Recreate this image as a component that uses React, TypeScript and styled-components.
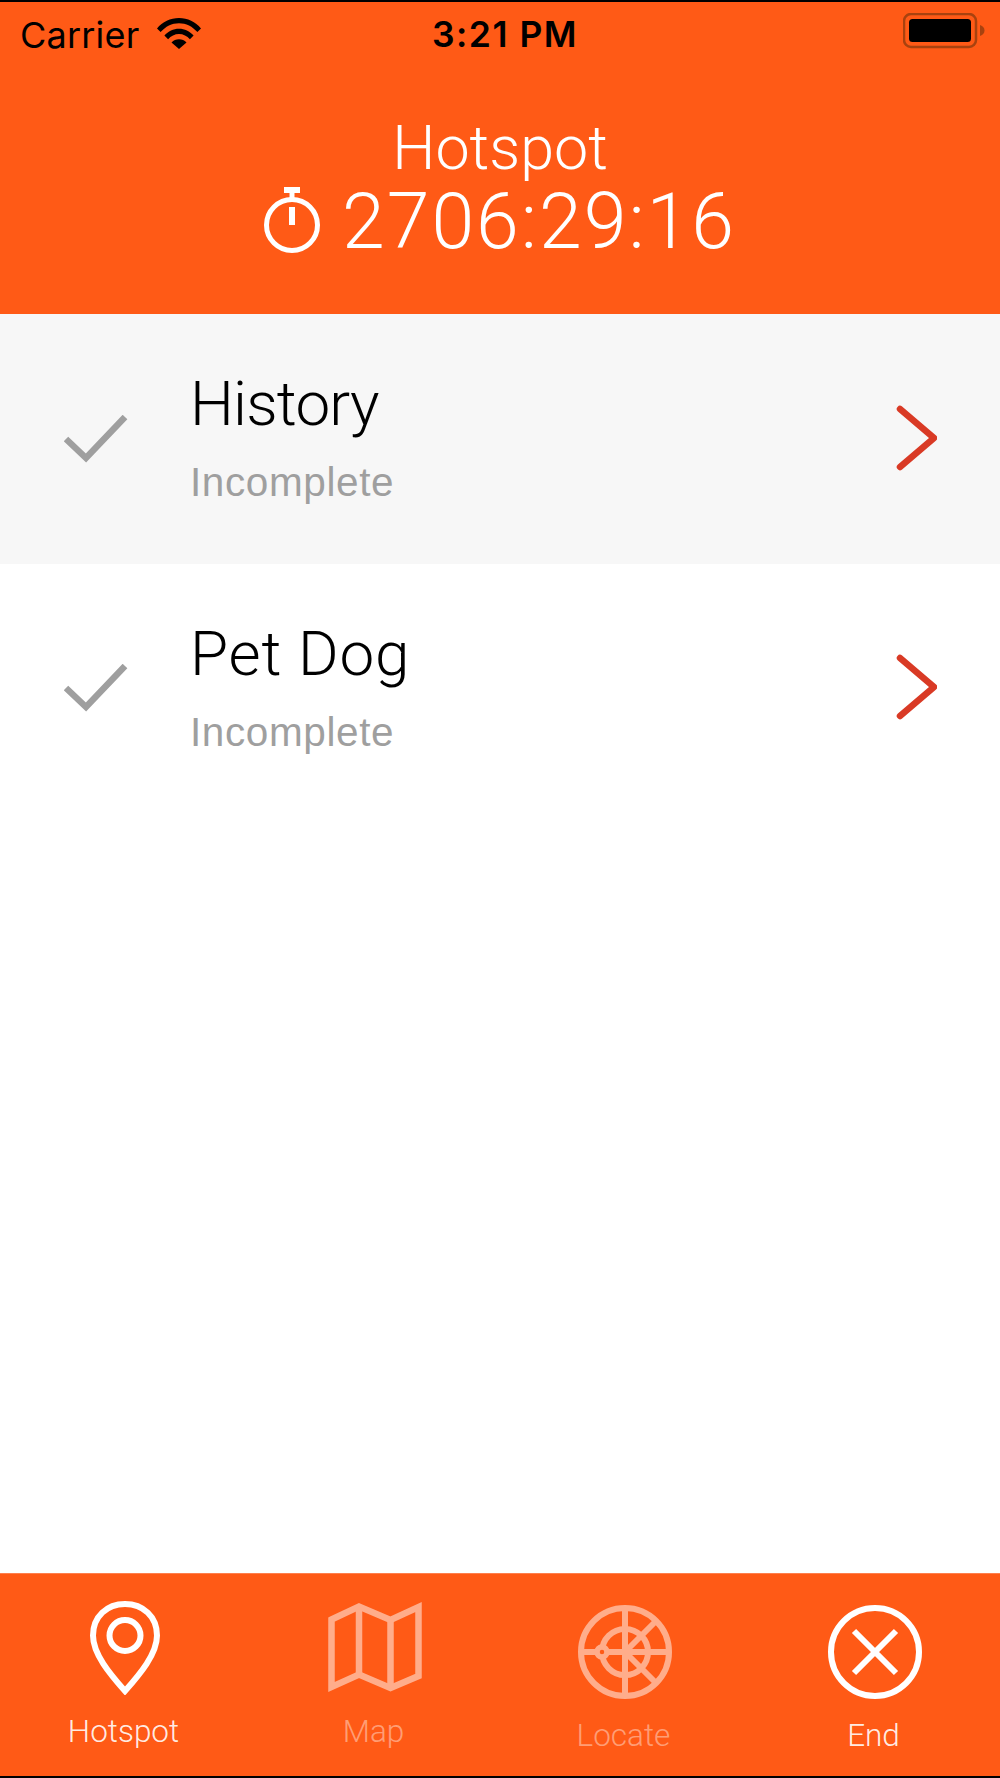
import React from "react";
import styled, { createGlobalStyle } from "styled-components";

const Global = createGlobalStyle`
  html, body { margin: 0; padding: 0; background: #000; }
  * { box-sizing: border-box; }
`;

const Screen = styled.div`
  width: 1000px;
  height: 1778px;
  padding: 2px 0;
  background: #000;
  display: flex;
  flex-direction: column;
  font-family: Roboto, "Liberation Sans", sans-serif;
`;

const Header = styled.header`
  height: 312px;
  flex: none;
  background: #ff5a16;
  display: flex;
  flex-direction: column;
`;

const StatusBar = styled.div`
  height: 62px;
  display: grid;
  grid-template-columns: 1fr auto 1fr;
  align-items: center;
  padding: 0 15px 0 20px;
  color: #000;
  font-family: Inter, "Liberation Sans", sans-serif;
`;

const StatusLeft = styled.div`
  display: flex;
  align-items: center;
  gap: 18px;
`;

const Carrier = styled.span`
  font-size: 36px;
  line-height: 42px;
  letter-spacing: 0.2px;
  padding-top: 3px;
`;

const Time = styled.span`
  font-size: 35.5px;
  line-height: 42px;
  font-weight: 600;
  letter-spacing: 1.5px;
  padding-top: 3px;
  margin-left: 5px;
`;

const Battery = styled.div`
  justify-self: end;
`;

const HeaderBody = styled.div`
  display: flex;
  flex-direction: column;
  align-items: center;
  padding-top: 48px;
  color: #fff;
  font-weight: 300;
`;

const Title = styled.div`
  font-size: 61px;
  line-height: 72px;
`;

const Timer = styled.div`
  display: flex;
  align-items: center;
  gap: 22px;
  font-size: 77px;
  line-height: 76px;
  letter-spacing: 2px;
`;

const StopwatchIcon = styled.svg`
  display: block;
  margin-bottom: 4px;
`;

const List = styled.main`
  flex: 1;
  background: #fff;
`;

const Row = styled.div<{ $shaded?: boolean }>`
  height: 249.5px;
  display: flex;
  align-items: center;
  padding: 0 63px 0 64px;
  background: ${(p) => (p.$shaded ? "#f7f7f7" : "#fff")};
`;

const RowText = styled.div`
  flex: 1;
  margin-left: 62px;
  padding-bottom: 3px;
`;

const RowTitle = styled.div<{ $track: number }>`
  font-size: 62px;
  line-height: 72px;
  font-weight: 300;
  letter-spacing: ${(p) => p.$track}px;
  color: #000;
`;

const RowSub = styled.div`
  font-family: "Liberation Sans", Arial, sans-serif;
  font-size: 40.5px;
  line-height: 48px;
  letter-spacing: 0.6px;
  margin-top: 18px;
  color: #9f9f9f;
`;

const ChevronIcon = styled.svg`
  display: block;
  margin-bottom: 2px;
`;

const TabBar = styled.footer`
  height: 203px;
  flex: none;
  display: grid;
  grid-template-columns: repeat(4, 1fr);
  background: #ff5a16;
  border-top: 1px solid #ff7f4c;
`;

const Tab = styled.div<{ $dim?: boolean; $top: number }>`
  display: flex;
  flex-direction: column;
  align-items: center;
  padding-top: ${(p) => p.$top}px;
  color: ${(p) => (p.$dim ? "rgba(255,255,255,0.42)" : "rgba(255,255,255,0.9)")};
  font-weight: 300;
  font-size: 31.5px;
  line-height: 38px;
`;

const IconSlot = styled.div<{ $dim?: boolean }>`
  height: 92px;
  margin-bottom: 20px;
  opacity: ${(p) => (p.$dim ? 0.5 : 1)};
`;

const TabLabel = styled.span`
  margin-right: 3px;
`;

const Wifi = () => (
  <svg width="44" height="31" viewBox="0 0 44 31" fill="#000">
    <path d="M0 10.500C5.500 3.800 13.400 0 22 0s16.500 3.800 22 10.500l-3.600 3.600C35.700 8.500 29 5.200 22 5.200S8.300 8.500 3.600 14.100z" />
    <path d="M7.400 17.500C11.200 13.200 16.400 10.700 22 10.700s10.800 2.500 14.600 6.800l-3.700 3.700C30.100 18 26.200 16 22 16s-8.100 2-10.900 5.200z" />
    <path d="M14.500 24.500C16.500 22.300 19.100 21.200 22 21.200s5.500 1.100 7.500 3.300L22 31z" />
  </svg>
);

const BatteryIcon = () => (
  <svg width="82" height="36" viewBox="0 0 82 36">
    <rect x="1" y="1" width="72" height="33" rx="7" fill="none" stroke="#a8420f" strokeWidth="2.500" />
    <rect x="6" y="6" width="62" height="23" rx="3.500" fill="#000" />
    <path d="M77 12c3 1 4.500 3 4.500 5.500S80 22 77 23z" fill="#a8420f" />
  </svg>
);

const Stopwatch = () => (
  <StopwatchIcon width="56" height="66" viewBox="0 0 56 66" fill="none" stroke="#fff">
    <circle cx="28" cy="38" r="25.500" strokeWidth="5" />
    <path d="M20 3h16" strokeWidth="6" />
    <path d="M28 3v9" strokeWidth="5" />
    <path d="M28 20v18" strokeWidth="6" />
  </StopwatchIcon>
);

const Check = () => (
  <svg width="64" height="48" viewBox="0 0 64 48" fill="none" stroke="#9f9f9f" strokeWidth="6.500">
    <path d="M2 24l20 19L61 2" />
  </svg>
);

const Chevron = () => (
  <ChevronIcon width="41" height="66" viewBox="0 0 41 66" fill="none" stroke="#d93a25" strokeWidth="6.500" strokeLinecap="round" strokeLinejoin="round">
    <path d="M4 4l34 29L4 62" />
  </ChevronIcon>
);

const ListRow = ({ title, track, shaded }: { title: string; track: number; shaded?: boolean }) => (
  <Row $shaded={shaded}>
    <Check />
    <RowText>
      <RowTitle $track={track}>{title}</RowTitle>
      <RowSub>Incomplete</RowSub>
    </RowText>
    <Chevron />
  </Row>
);

export default function App() {
  return (
    <Screen>
      <Global />
      <Header>
        <StatusBar>
          <StatusLeft>
            <Carrier>Carrier</Carrier>
            <Wifi />
          </StatusLeft>
          <Time>3:21 PM</Time>
          <Battery>
            <BatteryIcon />
          </Battery>
        </StatusBar>
        <HeaderBody>
          <Title>Hotspot</Title>
          <Timer>
            <Stopwatch />
            <span>2706:29:16</span>
          </Timer>
        </HeaderBody>
      </Header>
      <List>
        <ListRow title="History" track={-0.8} shaded />
        <ListRow title="Pet Dog" track={0.8} />
      </List>
      <TabBar>
        <Tab $top={27}>
          <IconSlot>
            <svg width="70" height="94" viewBox="0 0 70 94" fill="none" stroke="#fff" strokeWidth="6">
              <path d="M35 90C20 73 3 53 3 34.500 3 15.500 17 3 35 3s32 12.500 32 31.500C67 53 50 73 35 90z" />
              <circle cx="35" cy="34.500" r="15.500" />
            </svg>
          </IconSlot>
          <TabLabel>Hotspot</TabLabel>
        </Tab>
        <Tab $dim $top={27}>
          <IconSlot $dim>
            <svg width="94" height="92" viewBox="0 0 94 92" fill="none" stroke="#fff" strokeWidth="6.500">
              <path d="M3.500 18.500L31 5.500l31.500 13.500L90.500 6v69L62.500 87 31 73.500 3.500 86z" />
              <path d="M31 5.500v68M62.500 19v68" />
            </svg>
          </IconSlot>
          <TabLabel>Map</TabLabel>
        </Tab>
        <Tab $dim $top={31}>
          <IconSlot $dim>
            <svg width="94" height="94" viewBox="0 0 94 94" fill="none" stroke="#fff" strokeWidth="6">
              <circle cx="47" cy="47" r="44" />
              <path d="M47 3v88M3 47h88" />
              <circle cx="47" cy="47" r="23" />
              <path d="M47 47L78 16M47 47L78 78" />
              <circle cx="24" cy="47" r="5" fill="#ff5a16" strokeWidth="5.500" />
            </svg>
          </IconSlot>
          <TabLabel>Locate</TabLabel>
        </Tab>
        <Tab $top={31}>
          <IconSlot>
            <svg width="94" height="94" viewBox="0 0 94 94" fill="none" stroke="#fff" strokeWidth="6">
              <circle cx="47" cy="47" r="44" />
              <path d="M26 26l42 42M68 26L26 68" />
            </svg>
          </IconSlot>
          <TabLabel>End</TabLabel>
        </Tab>
      </TabBar>
    </Screen>
  );
}
